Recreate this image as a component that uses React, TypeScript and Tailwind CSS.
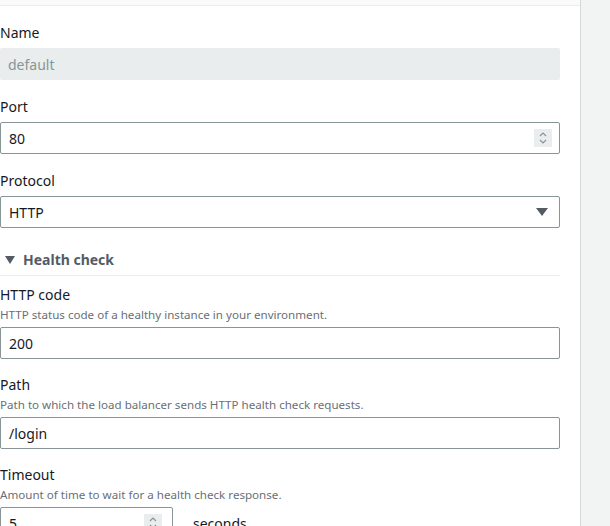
import React from "react"

function Spinner() {
    return (
        <div className="w-[18px] h-[18px] bg-[#eaeded] flex items-center justify-center">
            <svg width="10" height="14" viewBox="0 0 10 14" fill="none" stroke="#879596" strokeWidth="1.2">
                <path d="M2 5 L5 2 L8 5" />
                <path d="M2 9 L5 12 L8 9" />
            </svg>
        </div>
    )
}

function Field({ label, desc, children }: { label: string; desc?: string; children: React.ReactNode }) {
    return (
        <div className="flex flex-col">
            <div className="text-[14px] leading-[22px] text-[#16191f]">{label}</div>
            {desc && <div className="text-[11.6px] leading-[18px] text-[#687078]">{desc}</div>}
            <div className={desc ? "mt-[3px]" : "mt-[4px]"}>{children}</div>
        </div>
    )
}

function TextInput({ value }: { value: string }) {
    return (
        <div className="h-[32px] w-[560px] border border-[#879596] rounded-[2px] px-[8px] flex items-center text-[14px] text-[#16191f]">
            {value}
        </div>
    )
}

export default function App() {
    return (
        <div className="w-[610px] h-[526px] flex overflow-hidden bg-[#f2f3f3]" style={{ fontFamily: "'Noto Sans', Roboto, sans-serif" }}>
            <div className="w-[581px] shrink-0 bg-white border-r border-[#d5dbdb] flex flex-col">
                <div className="h-[6px] shrink-0 bg-[#fafafa] border-b border-[#eaeded]" />
                <div className="flex flex-col gap-[16px] pt-[16px]">
                    <Field label="Name">
                        <div className="h-[32px] w-[560px] bg-[#eaeded] rounded-[2px] px-[8px] flex items-center text-[14px] text-[#879596]">
                            default
                        </div>
                    </Field>
                    <Field label="Port">
                        <div className="h-[32px] w-[560px] border border-[#879596] rounded-[2px] pl-[8px] pr-[7px] flex items-center justify-between text-[14px] text-[#16191f]">
                            <span>80</span>
                            <Spinner />
                        </div>
                    </Field>
                    <Field label="Protocol">
                        <div className="h-[32px] w-[560px] border border-[#879596] rounded-[2px] pl-[8px] pr-[11px] flex items-center justify-between text-[14px] text-[#16191f]">
                            <span>HTTP</span>
                            <svg width="12" height="8" viewBox="0 0 12 8">
                                <path d="M0 0 H12 L6 8 Z" fill="#545b64" />
                            </svg>
                        </div>
                    </Field>
                </div>
                <div className="mt-[16px] w-[560px] shrink-0 border-b border-[#eaeded] h-[32px] flex items-center gap-[8px] pl-[5px] text-[14px] font-bold text-[#545b64]">
                    <svg width="10" height="8" viewBox="0 0 10 8">
                        <path d="M0 0 H10 L5 8 Z" fill="#545b64" />
                    </svg>
                    <span>Health check</span>
                </div>
                <div className="flex flex-col gap-[15px] pt-[8px]">
                    <Field label="HTTP code" desc="HTTP status code of a healthy instance in your environment.">
                        <TextInput value="200" />
                    </Field>
                    <Field label="Path" desc="Path to which the load balancer sends HTTP health check requests.">
                        <TextInput value="/login" />
                    </Field>
                    <Field label="Timeout" desc="Amount of time to wait for a health check response.">
                        <div className="flex items-center gap-[20px]">
                            <div className="h-[32px] w-[173px] border border-[#879596] rounded-[2px] pl-[8px] pr-[10px] flex items-center justify-between text-[14px] text-[#16191f]">
                                <span>5</span>
                                <Spinner />
                            </div>
                            <span className="text-[14px] text-[#16191f]">seconds</span>
                        </div>
                    </Field>
                </div>
            </div>
        </div>
    )
}
